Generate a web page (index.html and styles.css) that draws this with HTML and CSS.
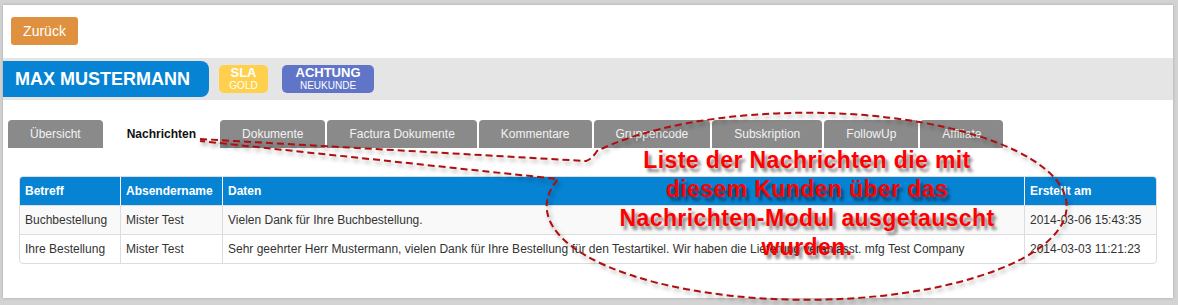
FILE: index.html
```html
<!DOCTYPE html>
<html>
	<head>
		<meta charset="UTF-8">
		<title>Kunde</title>
		<link rel="stylesheet" href="styles.css">
	</head>
	<body>
		<div class="page">
			<div class="toolbar">
				<button class="backBtn">Zurück</button>
			</div>
			<div class="customer">
				<div class="name">MAX MUSTERMANN</div>
				<div class="tag sla"><b>SLA</b><span>GOLD</span></div>
				<div class="tag warn"><b>ACHTUNG</b><span>NEUKUNDE</span></div>
			</div>
			<ul class="tabs">
				<li>Übersicht</li>
				<li class="active">Nachrichten</li>
				<li>Dokumente</li>
				<li>Factura Dokumente</li>
				<li>Kommentare</li>
				<li>Gruppencode</li>
				<li>Subskription</li>
				<li>FollowUp</li>
				<li>Affiliate</li>
			</ul>
			<div class="list">
				<table cellspacing="0">
					<thead>
						<tr>
							<th class="c1">Betreff</th>
							<th class="c2">Absendername</th>
							<th class="c3">Daten</th>
							<th>Erstellt am</th>
						</tr>
					</thead>
					<tbody>
						<tr>
							<td>Buchbestellung</td>
							<td>Mister Test</td>
							<td>Vielen Dank für Ihre Buchbestellung.</td>
							<td>2014-03-06 15:43:35</td>
						</tr>
						<tr>
							<td>Ihre Bestellung</td>
							<td>Mister Test</td>
							<td>Sehr geehrter Herr Mustermann, vielen Dank für Ihre Bestellung für den Testartikel. Wir haben die Lieferung veranlasst. mfg Test Company</td>
							<td>2014-03-03 11:21:23</td>
						</tr>
					</tbody>
				</table>
			</div>
		</div>

		<!--Hinweis über dem Screenshot-->
		<svg class="bubble" width="1178" height="305" viewBox="0 0 1178 305">
			<path d="M200 139 L586 161 Q592 159 597 151 A260 93.5 0 1 1 558 179 L200 141"
				fill="none" stroke="#b00d0d" stroke-width="2" stroke-dasharray="7 4"/>
		</svg>
		<div class="note">Liste der Nachrichten die mit<br>diesem Kunden über das<br>Nachrichten-Modul ausgetauscht<br>wurden.</div>
	</body>
</html>
```

FILE: styles.css
```css
* {
	margin: 0;
	padding: 0;
}

body {
	background: #d3d3d3;
	font-family: "Liberation Sans", Arial, sans-serif;
	font-size: 12px;
	color: #333;
	position: relative;
	width: 1178px;
	height: 305px;
	overflow: hidden;
}

.page {
	background: #fff;
	margin: 5px 5px 0 3px;
	height: 293px;
	box-shadow: 0 0 3px rgba(0, 0, 0, .2);
}

.toolbar {
	padding: 12px 8px 13px;
}

.backBtn {
	display: block;
	width: 67px;
	height: 28px;
	border: 0;
	border-radius: 3px;
	background: #e0913f;
	color: #fff;
	font-family: inherit;
	font-size: 14px;
}

.customer {
	display: flex;
	align-items: center;
	height: 42px;
	background: #e5e5e5;
}

.customer .name {
	height: 36px;
	line-height: 36px;
	width: 194px;
	padding-left: 12px;
	background: #0683d3;
	border-radius: 0 8px 8px 0;
	color: #fff;
	font-size: 18px;
	font-weight: bold;
}

.tag {
	display: flex;
	flex-direction: column;
	align-items: center;
	justify-content: center;
	height: 28px;
	border-radius: 5px;
	color: #fff;
	line-height: 12px;
}

.tag b {
	font-size: 13px;
}

.tag span {
	font-size: 10px;
	margin-top: 1px;
}

.sla {
	width: 49px;
	margin-left: 10px;
	background: #ffd04c;
}

.warn {
	width: 92px;
	margin-left: 14px;
	background: #6175c8;
}

.tabs {
	display: flex;
	list-style: none;
	padding: 20px 0 0 5px;
}

.tabs li {
	height: 28px;
	line-height: 28px;
	padding: 0 22px;
	margin-right: 2px;
	background: #8a8a8a;
	color: #f2f2f2;
	border-radius: 4px 4px 0 0;
}

.tabs li.active {
	background: #fff;
	color: #111;
	font-weight: bold;
}

.list {
	padding: 28px 16px 0;
}

.list table {
	width: 100%;
	border-collapse: separate;
	border: 1px solid #ddd;
	border-radius: 4px;
	overflow: hidden;
}

.list th {
	height: 28px;
	background: #0683d3;
	color: #fff;
	text-align: left;
	padding: 0 5px;
	border-left: 1px solid #fff;
}

.list td {
	height: 28px;
	padding: 0 5px;
	border-top: 1px solid #ddd;
	border-left: 1px solid #ddd;
	white-space: nowrap;
}

.list th:first-child,
.list td:first-child {
	border-left: 0;
}

.list tbody tr:first-child td {
	background: #f9f9f9;
}

.list .c1 {
	width: 90px;
}

.list .c2 {
	width: 91px;
}

.list .c3 {
	width: 791px;
}

.bubble {
	position: absolute;
	left: 0;
	top: 0;
	filter: drop-shadow(2px 3px 2px rgba(0, 0, 0, .35));
}

.note {
	position: absolute;
	left: 547px;
	top: 146px;
	width: 520px;
	text-align: center;
	color: #ff0000;
	font-size: 23px;
	font-weight: bold;
	letter-spacing: .4px;
	line-height: 29px;
	text-shadow: 3px 4px 3px rgba(0, 0, 0, .45);
}
```
